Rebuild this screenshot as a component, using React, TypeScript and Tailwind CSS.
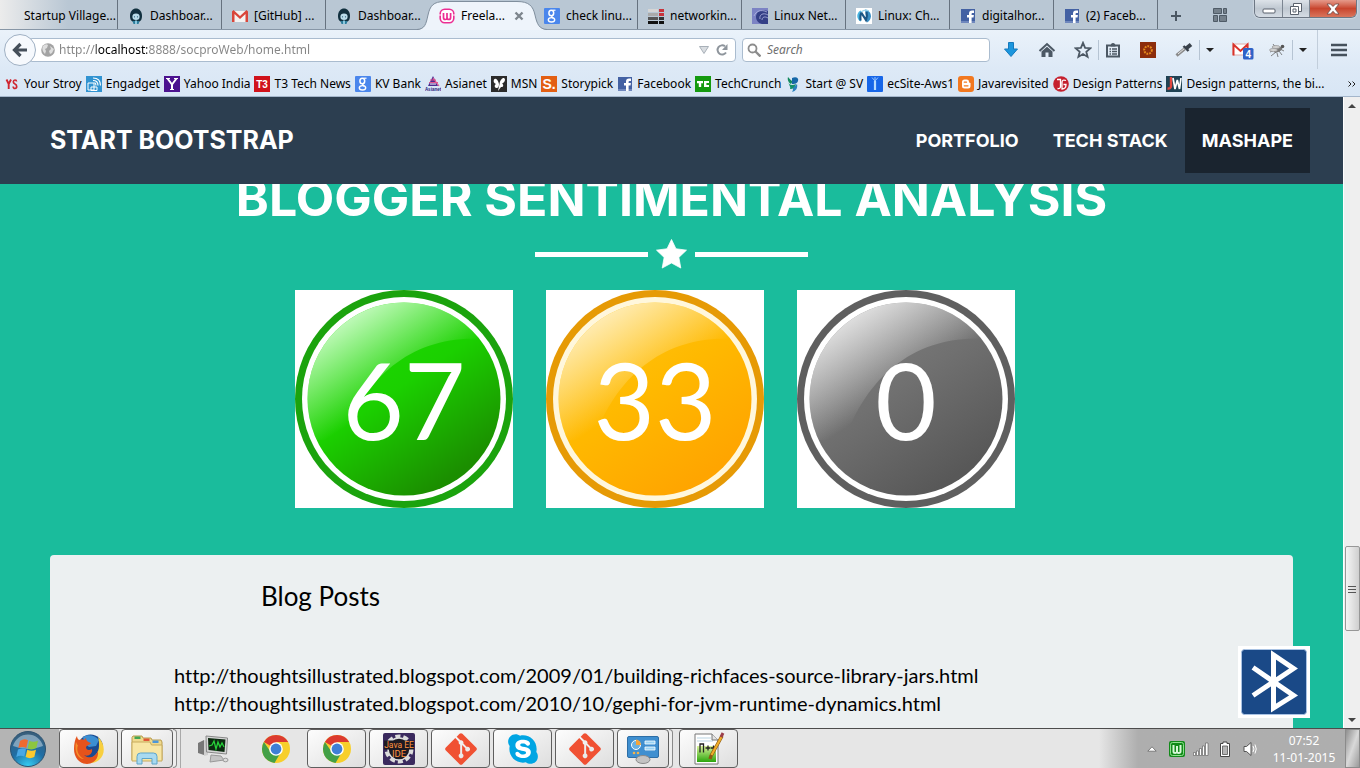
import React from "react";
import type { ReactNode } from "react";
import { FaGitAlt, FaSkype } from "react-icons/fa";

/* ---------- small site icons ---------- */

function Tile({ bg, fg = "#fff", label, size = 11, font = "Liberation Sans", x = 8, y = 12, r = 0 }: {
  bg: string; fg?: string; label: string; size?: number; font?: string; x?: number; y?: number; r?: number;
}) {
  return (
    <svg viewBox="0 0 16 16" className="size-4 shrink-0" aria-hidden="true">
      <rect width="16" height="16" rx={r} fill={bg} />
      <text x={x} y={y} fontSize={size} fontWeight="700" fontFamily={`${font}, sans-serif`} fill={fg} textAnchor="middle">{label}</text>
    </svg>
  );
}

const Icon16 = ({ children }: { children: ReactNode }) => (
  <svg viewBox="0 0 16 16" className="size-4 shrink-0" aria-hidden="true">{children}</svg>
);

const Facebook = () => (
  <Icon16>
    <rect x="1" y="1" width="14" height="14" fill="#4361a3" />
    <path d="M1 13h14v2H1z" fill="#6f87bd" />
    <path d="M9 15V9.500H7V7h2V5.500C9 3.500 10 2.500 12 2.500h2V5h-1.300c-.8 0-1.100.3-1.100 1V7h2.300l-.4 2.500h-1.900V15z" fill="#fff" />
  </Icon16>
);

const Google = () => (
  <Icon16>
    <rect width="16" height="16" rx="1" fill="#4a86ec" />
    <ellipse cx="7.300" cy="5" rx="2.400" ry="2.800" fill="none" stroke="#fff" strokeWidth="1.500" />
    <path d="M8.500 2.200h3" stroke="#fff" strokeWidth="1.200" />
    <path d="M9 7.200C6.500 8.500 8 9.200 9.500 10.200" fill="none" stroke="#fff" strokeWidth="1.300" />
    <ellipse cx="7.500" cy="11.800" rx="3.200" ry="2.200" fill="none" stroke="#fff" strokeWidth="1.400" />
  </Icon16>
);

const Dashboard = () => (
  <Icon16>
    <path d="M2 8c0-5 3-7.500 6-7.500S14 3 14 8c0 3-1 5-2.500 5.500h-7C3 13 2 11 2 8z" fill="#11303f" />
    <ellipse cx="8" cy="8.800" rx="3.600" ry="3.200" fill="#b9dcea" />
    <circle cx="6.500" cy="8.800" r=".6" fill="#1d5871" />
    <circle cx="9.500" cy="8.800" r=".6" fill="#1d5871" />
    <path d="M4.500 13h7l-1 3h-5z" fill="#2c7c9b" />
    <path d="M7 12.500h2V16H7z" fill="#8bc7dd" />
  </Icon16>
);

const Gmail = () => (
  <Icon16>
    <rect x="1" y="3" width="14" height="11" fill="#f4f2f1" />
    <path d="M0 3.500 1.500 2 8 8l6.500-6L16 3.500V14h-2.500V6L8 11 2.500 6v8H0z" fill="#d9453a" />
  </Icon16>
);

const Wamp = () => (
  <Icon16>
    <rect x="1.200" y="1.200" width="13.600" height="13.600" rx="4.500" fill="#fff" stroke="#ec2e93" strokeWidth="1.600" />
    <path d="M4.500 5v4.500Q4.500 11.500 6.300 11.500T8 9.500V5v4.500q0 2 1.800 2t1.800-2V5" fill="none" stroke="#ec2e93" strokeWidth="1.700" />
    <path d="M0 7h2M14 7h2" stroke="#fff" strokeWidth="1.200" />
  </Icon16>
);

const Bars = () => (
  <Icon16>
    <path d="M0 1h10v3H0z" fill="#d5d5d5" /><path d="M0 5h10v3H0z" fill="#aaa" />
    <path d="M0 9h10v3H0z" fill="#555" /><path d="M0 13h10v3H0zM11 13h5v3h-5z" fill="#111" />
    <path d="M11 1h5v3h-5zM11 5h5v3h-5z" fill="#c8343c" /><path d="M11 9h5v3h-5z" fill="#333" />
  </Icon16>
);

const Swirl = () => (
  <Icon16>
    <rect width="16" height="16" fill="#7c83c4" />
    <path d="M16 3C9 1 4 4 4 9c0 3 2 6 6 7h6z" fill="#343f86" />
    <path d="M16 7c-5-3-9 0-8 4M16 10c-3-2-6-1-6 2M2 8C4 3 9 1 15 4" fill="none" stroke="#b3b8e2" strokeWidth=".8" />
  </Icon16>
);

const Naver = () => (
  <Icon16>
    <rect width="16" height="16" fill="#fff" />
    <path d="M5 13.500C0 12 0 4 5 2.500z" fill="#49b4e0" />
    <path d="M9 1.500c7 1 8 10 2 13z" fill="#3b8fc4" />
    <path d="M4.500 12.500Q4 6 5.500 5L10 12q1.500-4 .5-8" fill="none" stroke="#1c5685" strokeWidth="2.200" />
    <path d="M5 4q4-3 8-1" fill="none" stroke="#9fd6ee" strokeWidth="1.200" />
  </Icon16>
);

const Engadget = () => (
  <Icon16>
    <rect width="16" height="16" fill="#3193d1" />
    <path d="M2 7h6v7H2zM5 11h6v3.500H5z" fill="none" stroke="#fff" />
    <path d="M7 4.500q5 0 5 5M7 2q7.500 0 7.500 7.500M8.500 6.500q1.500 1 1.500 3" fill="none" stroke="#fff" strokeWidth="1.100" />
  </Icon16>
);

const Asianet = () => (
  <Icon16>
    <path d="M8 0 3 10h10z" fill="#4a2c91" />
    <path d="M5 4h6M4 6.500h9M8 2l6 8" stroke="#e4558f" strokeWidth="1.200" />
    <path d="M5 8h6" stroke="#fff" />
    <text x="8" y="15" fontSize="4.500" fontWeight="700" fontFamily="Liberation Sans, sans-serif" fill="#26217c" textAnchor="middle">Asianet</text>
  </Icon16>
);

const Msn = () => (
  <Icon16>
    <rect width="16" height="16" fill="#2b2b2b" />
    <path d="M8 8C7 3 4 1.500 3 3.500s0 3.500 2 4.500c-2 1-1.500 4 .5 4S8 10 8 8zM8.500 8C9 4 12 1 13.500 2.500S13 7 11 7.500c2 1 1.500 4-1 3.500L7 15z" fill="#fff" />
  </Icon16>
);

const Leaf = () => (
  <Icon16>
    <path d="M3 1c2 2 3 4 5 4L6 8C4 7 2 4 3 1z" fill="#138a5d" /><path d="M7 2c4-2 7 0 6 3s-4 3-6 3z" fill="#1668a8" />
    <path d="M3 6c1 3 4 4 8 2-1 4-3 5-6 5 1-2-1-4-2-7z" fill="#12906a" /><path d="M12 8c1 4-1 7-5 8 1-1 1-3 1-4z" fill="#2a82be" />
  </Icon16>
);

const Aws = () => (
  <Icon16>
    <rect width="16" height="16" rx="1" fill="#1766e8" />
    <path d="M8 5v9" stroke="#b8dcff" strokeWidth="2.200" />
    <path d="M5 1.500 8 5l3-3.500M8 1v4" fill="none" stroke="#9cc8ff" />
  </Icon16>
);

const Blogger = () => (
  <Icon16>
    <rect width="16" height="16" rx="3" fill="#f2781f" />
    <path d="M6.500 3.500h2.300q2.200 0 2.200 2.200 0 1.300 1.500 1.300V10q0 2.500-2.500 2.500H6.500Q4 12.500 4 10V6q0-2.500 2.500-2.500z" fill="#fff" />
    <path d="M6.300 6.200h2.200M6.300 9.800h3.700" stroke="#f2781f" strokeWidth="1.300" strokeLinecap="round" />
  </Icon16>
);

const Patterns = () => (
  <Icon16>
    <circle cx="8" cy="8" r="7.800" fill="#c5202e" />
    <path d="M4 3.500h3.500v7q0 2.500-3 2M13 4.500q-4-1.500-4 2V13q4 0 4-4.500h-2.500" fill="none" stroke="#fff" strokeWidth="1.300" />
  </Icon16>
);

const Jw = () => (
  <Icon16>
    <rect width="16" height="16" fill="#1f4254" />
    <path d="M5 1v9q0 3-3.500 2.500" fill="none" stroke="#e0463e" strokeWidth="2.400" />
    <path d="m7 2 2 11 2.300-9L13.500 13 15 2" fill="none" stroke="#fff" strokeWidth="1.700" />
  </Icon16>
);

/* ---------- browser chrome ---------- */

type Tab = { label: string; icon?: ReactNode; active?: boolean };

const tabs: Tab[] = [
  { label: "Startup Village..." },
  { label: "Dashboar...", icon: <Dashboard /> },
  { label: "[GitHub] ...", icon: <Gmail /> },
  { label: "Dashboar...", icon: <Dashboard /> },
  { label: "Freela...", icon: <Wamp />, active: true },
  { label: "check linu...", icon: <Google /> },
  { label: "networkin...", icon: <Bars /> },
  { label: "Linux Net...", icon: <Swirl /> },
  { label: "Linux: Ch...", icon: <Naver /> },
  { label: "digitalhor...", icon: <Facebook /> },
  { label: "(2) Faceb...", icon: <Facebook /> },
];

function TabStrip() {
  return (
    <div className="flex h-[30px] items-stretch border-b border-[#8796a6] bg-linear-to-r from-[#ececec] from-0% via-[#b9c7d4] via-5% to-[#b9c7d4] pl-[14px]">
      <div role="tablist" className="flex">
        {tabs.map((tab, i) =>
          tab.active ? (
            <div key={i} className="relative flex w-[104px] items-center gap-1.5 pl-[9px] pt-0.5">
              <svg viewBox="0 0 130 30" className="absolute -left-[13px] top-0 z-0 h-[30px] w-[130px]" aria-hidden="true">
                <path d="M0 30C8 29 9 24 11 15S16 1.500 28 1.500H100C112 1.500 116 6 118 15s4 14 12 15z" fill="#eef4fb" />
                <path d="M0 29.500C8 29 9 24 11 15S16 1.500 28 1.500H100C112 1.500 116 6 118 15s4 14 12 14.500" fill="none" stroke="#7f8e9d" />
              </svg>
              <button role="tab" aria-selected="true" className="relative flex items-center gap-1.5">
                {tab.icon}
                <span>{tab.label}</span>
              </button>
              <button aria-label="Close tab" className="relative ml-auto mr-2.5">
                <svg viewBox="0 0 10 10" className="size-2.5"><path d="m1.500 1.500 7 7m0-7-7 7" stroke="#7d858d" strokeWidth="2.400" /></svg>
              </button>
            </div>
          ) : (
            <button key={i} role="tab" aria-selected="false" className={`flex w-[104px] items-center gap-1.5 whitespace-nowrap pl-2.5 pt-0.5 ${i === 3 ? "" : "border-r border-[#66727f]"}`}>
              {tab.icon}
              <span>{tab.label}</span>
            </button>
          ),
        )}
      </div>
      <button aria-label="New tab" className="ml-3 flex items-center pt-0.5">
        <svg viewBox="0 0 12 12" className="size-3"><path d="M6 1v10M1 6h10" stroke="#4b5763" strokeWidth="2" /></svg>
      </button>
      <button aria-label="Tab groups" className="ml-[30px] flex items-center">
        <svg viewBox="0 0 16 14" className="h-3.5 w-4">
          <path d="M1.500.5h8v5h-8zM11.500.5h3v5h-3zM1.500 7.500h4v6h-4zM7.500 7.500h7v6h-7z" fill="#74808b" stroke="#4f5b67" />
        </svg>
      </button>
      <div className="ml-auto mr-[3px] flex h-[18px] overflow-hidden rounded-b-md border border-t-0 border-[#6d7784] shadow-[0_0_2px_#ffffff]">
        <button aria-label="Minimize" className="flex w-7 items-center justify-center border-r border-[#7b8591] bg-linear-to-b from-[#dde3e9] via-[#bfc8d1] to-[#d5dce4]">
          <svg viewBox="0 0 14 6" className="mt-1 h-1.5 w-3.5"><rect x="1" y="1" width="12" height="4" rx="1" fill="#fff" stroke="#59616c" /></svg>
        </button>
        <button aria-label="Restore" className="flex w-[27px] items-center justify-center border-r border-[#7b8591] bg-linear-to-b from-[#dde3e9] via-[#bfc8d1] to-[#d5dce4]">
          <svg viewBox="0 0 12 12" className="size-3 fill-white stroke-[#59616c]"><path d="M3.500.5h8v8h-8z" /><path d="M.5 3.500h8v8h-8z" /><path d="M3 6h3v3H3z" /></svg>
        </button>
        <button aria-label="Close" className="flex w-[46px] items-center justify-center bg-linear-to-b from-[#e59a8b] via-[#c8452e] to-[#d9755c]">
          <svg viewBox="0 0 14 12" className="h-3 w-3.5"><path d="m1 1 3.500 0L7 3.500 9.500 1H13L9 6l4 5H9.500L7 8.300 4.500 11H1l4-5z" fill="#fff" stroke="#6a4a48" strokeWidth=".8" /></svg>
        </button>
      </div>
    </div>
  );
}

function Toolbar() {
  return (
    <div className="flex h-[39px] items-center bg-linear-to-b from-[#eaf2fa] to-[#dde9f6] pl-1">
      <button aria-label="Back" className="relative z-10 flex size-8 shrink-0 items-center justify-center rounded-full border border-[#9fb0c3] bg-[#f6f9fd]">
        <svg viewBox="0 0 16 16" className="size-4"><path d="M8.500 2 2.500 8l6 6M3 8h12" fill="none" stroke="#454f5a" strokeWidth="3.200" /></svg>
      </button>
      <div className="-ml-2 flex h-6 flex-1 items-center rounded-sm border border-[#aabccf] bg-white pl-3 pr-1.5">
        <svg viewBox="0 0 14 14" className="size-3.5 shrink-0" aria-hidden="true">
          <circle cx="7" cy="7" r="6.800" fill="#a3a3a3" />
          <path d="M2 3q3-3 5-1L6 5 4 6l1 2-1 3Q0 7 2 3zM9 3l4 3-2 4-2 1-1-3 2-2z" fill="#dedede" />
        </svg>
        <input
          aria-label="Address"
          defaultValue="http://localhost:8888/socproWeb/home.html"
          className="ml-1 h-5 min-w-0 flex-1 bg-[linear-gradient(to_right,#858585_37px,#000000_37px,#000000_88px,#858585_88px)] bg-clip-text text-transparent outline-none"
        />
        <button aria-label="Show history">
          <svg viewBox="0 0 10 8" className="h-2 w-2.5"><path d="M.5.5h9L5 7.500z" fill="#d9dde1" stroke="#a8b0b8" /></svg>
        </button>
        <button aria-label="Reload" className="ml-1.5">
          <svg viewBox="0 0 14 14" className="size-3.5"><path d="M11 9.500A4.600 4.600 0 1 1 10 3.300" fill="none" stroke="#8e959c" strokeWidth="2" /><path d="M12.500 1v6H7z" fill="#8e959c" /></svg>
        </button>
      </div>
      <div className="ml-1.5 flex h-6 w-[248px] items-center gap-1.5 rounded-sm border border-[#aabccf] bg-white px-1">
        <svg viewBox="0 0 14 14" className="size-3.5 shrink-0" aria-hidden="true"><circle cx="5.500" cy="5.500" r="4" fill="none" stroke="#8c8c8c" strokeWidth="1.800" /><path d="m8.500 8.500 5 5" stroke="#8c8c8c" strokeWidth="2.400" /></svg>
        <input aria-label="Search" placeholder="Search" className="h-5 min-w-0 flex-1 bg-transparent italic outline-none placeholder:text-[#6f6f6f]" />
      </div>
      <div className="flex h-full items-center pl-3.5">
        <button aria-label="Downloads"><svg viewBox="0 0 14 15" className="h-[15px] w-3.5"><path d="M4.500.5h5V7h4L7 14.500.5 7h4z" fill="#1c96dd" stroke="#1579bd" /></svg></button>
        <button aria-label="Home" className="ml-5">
          <svg viewBox="0 0 18 16" className="h-4 w-[18px]"><path d="M1.500 9 9 2l7.500 7" fill="none" stroke="#4c5864" strokeWidth="2" /><path d="M3.500 9.500 9 4.800l5.500 4.700V15h-4v-4.500h-3V15h-4z" fill="#4c5864" /></svg>
        </button>
        <button aria-label="Bookmark this page" className="ml-[18px]">
          <svg viewBox="0 0 18 18" className="size-[18px]"><path d="m9 1.800 2.100 5 5.300.4-4.100 3.500 1.300 5.200L9 13.100l-4.600 2.800 1.300-5.200L1.600 7.200l5.300-.4z" fill="none" stroke="#4c5864" strokeWidth="1.800" /></svg>
        </button>
        <span className="ml-1.5 h-5 w-px bg-[#b6c4d3]" />
        <button aria-label="Bookmarks" className="ml-1.5">
          <svg viewBox="0 0 16 16" className="size-4"><path d="M2 3.500h12v11H2z" fill="none" stroke="#4c5864" strokeWidth="2" /><path d="M5.500 4.500 6 2q2-2 4 0l.5 2.500z" fill="#4c5864" /><path d="M4.500 7h1.500M7 7h5M4.500 9.500h1.500M7 9.500h5M4.500 12h1.500M7 12h5" stroke="#4c5864" strokeWidth="1.300" /></svg>
        </button>
        <button aria-label="Extension" className="ml-[19px]">
          <svg viewBox="0 0 16 16" className="size-4"><rect width="16" height="16" fill="#8c2d0c" /><circle cx="8" cy="8" r="3.800" fill="none" stroke="#e68a1c" strokeWidth="2" strokeDasharray="1.800 1" /></svg>
        </button>
        <button aria-label="Color picker" className="ml-[19px]">
          <svg viewBox="0 0 18 16" className="h-4 w-[18px]"><path d="m1.500 13.500 8-6.500" stroke="#8b8b8b" strokeWidth="3.200" /><path d="m3 12 7-6" stroke="#e9e9e9" /><path d="m8.500 4 5 5" stroke="#39414a" strokeWidth="2.400" /><path d="m11 6.500 5-4" stroke="#39414a" strokeWidth="4" /></svg>
        </button>
        <span className="ml-1.5 h-5 w-px bg-[#b6c4d3]" />
        <button aria-label="Color picker menu" className="ml-1.5"><svg viewBox="0 0 8 4" className="h-1 w-2"><path d="M0 0h8L4 4z" fill="#222" /></svg></button>
        <button aria-label="Mail" className="relative ml-[18px] flex h-5 w-[22px] items-center">
          <svg viewBox="0 0 22 20" className="h-5 w-[22px]">
            <path d="M1 4h15v11H1z" fill="#fff" stroke="#e0aaa6" /><path d="M1.500 15.500v-11l7 6.500 7-6.500v11" fill="none" stroke="#d9332b" strokeWidth="2" />
            <rect x="11" y="8" width="10.500" height="11.500" rx="1.500" fill="#2f62c7" />
            <text x="16.200" y="17.500" fontSize="10" fontWeight="700" fontFamily="Liberation Sans, sans-serif" fill="#fff" textAnchor="middle">4</text>
          </svg>
        </button>
        <button aria-label="Firebug" className="ml-3.5">
          <svg viewBox="0 0 18 16" className="h-4 w-[18px]"><path d="m2 10 5-2M3 14l5-4M9 11l1 4M5 2l3 4M16 9l-4-2M14 13l-3-4" stroke="#666" strokeWidth=".8" /><ellipse cx="10" cy="8" rx="4.500" ry="2" transform="rotate(-28 10 8)" fill="#777" /><ellipse cx="5.500" cy="8" rx="4" ry="1.600" fill="#d2d2d2" stroke="#888" strokeWidth=".6" /><ellipse cx="8" cy="5" rx="4" ry="1.500" fill="#d2d2d2" stroke="#888" strokeWidth=".6" /><circle cx="14.500" cy="4.500" r="1.800" fill="#555" /></svg>
        </button>
        <span className="ml-1.5 h-5 w-px bg-[#b6c4d3]" />
        <button aria-label="Firebug menu" className="ml-1.5"><svg viewBox="0 0 8 4" className="h-1 w-2"><path d="M0 0h8L4 4z" fill="#222" /></svg></button>
        <span className="ml-2.5 h-full w-px bg-[#c2cedb]" />
        <button aria-label="Open menu" className="mx-[13px]"><svg viewBox="0 0 16 14" className="h-3.5 w-4"><path d="M0 2h16M0 7h16M0 12h16" stroke="#46515c" strokeWidth="2.600" /></svg></button>
      </div>
    </div>
  );
}

const bookmarks: { label: string; icon: ReactNode }[] = [
  { label: "Your Stroy", icon: <Icon16><path d="M2.500 3.500 4.700 8v5M7 3.500 4.700 8" fill="none" stroke="#cf2630" strokeWidth="1.900" /><path d="M12.500 5.500Q12.500 4 11 4T9.300 5.800Q9.300 7.300 11 8t1.700 2.600Q12.700 12.500 11 12.500T9.200 10.500" fill="none" stroke="#cf2630" strokeWidth="1.700" /></Icon16> },
  { label: "Engadget", icon: <Engadget /> },
  { label: "Yahoo India", icon: <Icon16><rect width="16" height="16" fill="#4b128f" /><path d="m3.500 2.500 4.500 6v5M12.500 2.500l-4.500 6" fill="none" stroke="#fff" strokeWidth="2" /><path d="M2 2.500h4M10 2.500h4M6 13.500h4" stroke="#fff" /></Icon16> },
  { label: "T3 Tech News", icon: <Tile bg="#d0121b" label="T3" size={10} /> },
  { label: "KV Bank", icon: <Google /> },
  { label: "Asianet", icon: <Asianet /> },
  { label: "MSN", icon: <Msn /> },
  { label: "Storypick", icon: <Tile bg="#e35f13" label="S." size={14} y={13} /> },
  { label: "Facebook", icon: <Facebook /> },
  { label: "TechCrunch", icon: <Icon16><rect width="16" height="16" fill="#149a10" /><path d="M2 5h6v2.300H6.200V11H3.800V7.300H2zM9 5h5v2h-2.600v2H14v2H9z" fill="#fff" /></Icon16> },
  { label: "Start @ SV", icon: <Leaf /> },
  { label: "ecSite-Aws1", icon: <Aws /> },
  { label: "Javarevisited", icon: <Blogger /> },
  { label: "Design Patterns", icon: <Patterns /> },
  { label: "Design patterns, the bi...", icon: <Jw /> },
];

function BookmarkBar() {
  return (
    <nav aria-label="Bookmarks" className="flex h-7 items-center border-b border-[#a4b6cb] bg-linear-to-b from-[#dde9f6] to-[#d8e6f5] pl-1 pt-0.5">
      <div className="flex min-w-0 flex-1 items-center gap-1 overflow-hidden">
        {bookmarks.map((b) => (
          <a key={b.label} href="#" className="flex shrink-0 items-center gap-1 whitespace-nowrap">
            {b.icon}
            <span>{b.label}</span>
          </a>
        ))}
      </div>
      <button aria-label="More bookmarks" className="mr-1">
        <svg viewBox="0 0 8 6" className="h-1.5 w-2"><path d="m.5.5 2.500 2.500L.5 5.500m4-5L7 3 4.500 5.500" fill="none" stroke="#222" /></svg>
      </button>
    </nav>
  );
}

/* ---------- page ---------- */

type ScoreProps = { id: string; value: number; ring: string; inner: string; shine: string; from: string; mid: string; to: string };

const scores: ScoreProps[] = [
  { id: "positive", value: 67, ring: "#1ba30d", inner: "#ffffff", shine: "#e2ffe0", from: "#1bdd00", mid: "#1bd000", to: "#1b8e00" },
  { id: "neutral", value: 33, ring: "#e69a05", inner: "#fff7dc", shine: "#fff3d2", from: "#ffc513", mid: "#ffb900", to: "#ffa500" },
  { id: "negative", value: 0, ring: "#5f5f5f", inner: "#ffffff", shine: "#f2f2f2", from: "#808080", mid: "#707070", to: "#585858" },
];

function Score({ id, value, ring, inner, shine, from, mid, to }: ScoreProps) {
  return (
    <div className="relative mr-[33px] size-[218px] bg-white">
      <svg viewBox="0 0 218 218" className="size-full" aria-hidden="true">
        <defs>
          <linearGradient id={`${id}-base`} x1=".2" y1=".1" x2=".75" y2=".9">
            <stop offset="0" stopColor={from} /><stop offset=".45" stopColor={mid} /><stop offset="1" stopColor={to} />
          </linearGradient>
          <linearGradient id={`${id}-shine`} gradientUnits="userSpaceOnUse" x1="52" y1="14" x2="108" y2="99">
            <stop offset="0" stopColor={shine} stopOpacity=".95" /><stop offset="1" stopColor={shine} stopOpacity="0" />
          </linearGradient>
          <clipPath id={`${id}-clip`}><circle cx="109" cy="109" r="96.500" /></clipPath>
        </defs>
        <circle cx="109" cy="109" r="109" fill={ring} />
        <circle cx="109" cy="109" r="102" fill={inner} />
        <circle cx="109" cy="109" r="96.500" fill={`url(#${id}-base)`} />
        <path clipPath={`url(#${id}-clip)`} d="M218 0V49H184C120 46 70 85 48 150H0V0z" fill={`url(#${id}-shine)`} />
      </svg>
      <span className="absolute inset-0 flex items-center justify-center font-[Lato,sans-serif] text-[106px] leading-none text-white">{value}</span>
    </div>
  );
}

const posts = [
  "http://thoughtsillustrated.blogspot.com/2009/01/building-richfaces-source-library-jars.html",
  "http://thoughtsillustrated.blogspot.com/2010/10/gephi-for-jvm-runtime-dynamics.html",
];

function Page() {
  return (
    <div className="relative flex min-w-0 flex-1 flex-col overflow-hidden bg-[#1abc9c] font-[Lato,sans-serif]">
      <header className="relative z-10 flex h-[87px] shrink-0 items-center justify-between bg-[#2c3e50] pl-[50px] pr-[33px] font-[Inter,sans-serif] font-bold text-white">
        <a href="#" className="text-[25px]">START BOOTSTRAP</a>
        <nav className="flex text-lg">
          <a href="#" className="flex h-[65px] items-center px-[17px]">PORTFOLIO</a>
          <a href="#" className="flex h-[65px] items-center px-[17px]">TECH STACK</a>
          <a href="#" className="flex h-[65px] items-center bg-[#1a242f] px-[17px]">MASHAPE</a>
        </nav>
      </header>
      <main className="flex min-h-0 flex-1 flex-col">
        <h2 className="-mt-2.5 shrink-0 text-center font-[Inter,sans-serif] text-[50px]/12 font-bold text-white">BLOGGER SENTIMENTAL ANALYSIS</h2>
        <div className="mt-4 flex shrink-0 items-center justify-center gap-2">
          <span className="h-[5px] w-[113px] bg-white" />
          <svg viewBox="0 0 32 32" className="h-8 w-[31px]" aria-hidden="true">
            <path d="M16 1 20.600 10.600 31.500 12 23.600 19.500 25.600 30.500 16 25.300 6.400 30.500 8.400 19.500.5 12 11.400 10.600z" fill="#fff" stroke="#fff" strokeWidth=".8" strokeLinejoin="round" />
          </svg>
          <span className="h-[5px] w-[113px] bg-white" />
        </div>
        <div className="mt-5 flex shrink-0 justify-center">
          {scores.map((s) => <Score key={s.id} {...s} />)}
        </div>
        <section className="mx-[50px] mt-[47px] flex-1 rounded-t-sm bg-[#ecf0f1] pt-[23px] text-black">
          <h3 className="pl-[211px] text-[26px]/9">Blog Posts</h3>
          <ul className="mt-[47px] pl-[124px] text-xl/7 [font-variant-ligatures:none]">
            {posts.map((p) => <li key={p}><a href={p}>{p}</a></li>)}
          </ul>
        </section>
      </main>
      <button aria-label="Bluetooth" className="absolute bottom-2.5 right-[33px] z-10 size-[72px] bg-white">
        <svg viewBox="0 0 72 72" className="size-full">
          <rect x="3.500" y="3.500" width="65" height="65" rx="3" fill="#1a4987" stroke="#a9c3e4" />
          <path d="M15 21.500 55.500 49.500 35.500 62V9L55.500 22.500 15 49.500" fill="none" stroke="#fff" strokeWidth="5" />
        </svg>
      </button>
    </div>
  );
}

function ScrollBar() {
  return (
    <div className="flex w-[17px] shrink-0 flex-col items-center border-l border-white bg-[#efefef]">
      <button aria-label="Scroll up" className="flex h-[17px] items-center"><svg viewBox="0 0 8 4" className="h-1 w-2"><path d="M0 4h8L4 0z" fill="#444" /></svg></button>
      <div className="flex-[432]" />
      <div className="flex h-[85px] w-[15px] items-center justify-center rounded-xs border border-[#979797] bg-linear-to-r from-[#f5f5f5] to-[#cfcfcf]">
        <svg viewBox="0 0 8 8" className="size-2"><path d="M0 1.500h8M0 4.500h8M0 7.500h8" stroke="#555" /></svg>
      </div>
      <div className="flex-[80]" />
      <button aria-label="Scroll down" className="flex h-[17px] items-center"><svg viewBox="0 0 8 4" className="h-1 w-2"><path d="M0 0h8L4 4z" fill="#444" /></svg></button>
    </div>
  );
}

/* ---------- task bar ---------- */

const Chrome = () => (
  <svg viewBox="0 0 30 30" className="size-[30px]" aria-hidden="true">
    <circle cx="15" cy="15" r="14" fill="#f7cf2c" />
    <path d="M15 15 2.900 8A14 14 0 0 1 27.200 8z" fill="#dc3a2f" />
    <path d="M2.900 8A14 14 0 0 0 13.500 29L20 18 9 17z" fill="#43a047" />
    <path d="M15 8h12.200L20 19z" fill="#f7cf2c" />
    <circle cx="15" cy="15" r="6.800" fill="#fff" />
    <circle cx="15" cy="15" r="5.400" fill="#3f7fd6" />
  </svg>
);

const Firefox = () => (
  <svg viewBox="0 0 32 32" className="size-8" aria-hidden="true">
    <circle cx="17.500" cy="14" r="12.500" fill="#1b4a90" />
    <path d="M10 4c5-3 12-2 16 3l-3 6-7 1-5-4z" fill="#3c8fd2" />
    <path d="M25 4c7 6 8 17 1 23-6 5-15 3-17-2 10 3 17-4 17-12 0-3 0-6-1-9z" fill="#f8cf3f" />
    <path d="M4 3c0 2 1 3 2 4 2-1 4-1 5 0l2-2c0 3 2 4 5 5-1 2-4 2-5 4 0 3 3 4 6 2 1 5-4 8-8 6 4 4 11 3 14-4 1 8-5 13-11 13C6 31 1 24 1 16c0-5 1-10 3-13z" fill="#e5531b" />
    <path d="M3 9c1 2 1 3 2 3-2 5 0 11 6 14-6 0-10-7-8-17z" fill="#f58f2a" />
  </svg>
);

const Explorer = () => (
  <svg viewBox="0 0 34 32" className="h-8 w-[34px]" aria-hidden="true">
    <path d="M2 4.500 3 3h9l1 2h8l1 2h9l1 2v18H2z" fill="#f0d98d" stroke="#b89c4e" />
    <path d="M4.500 3.500h6v2.500h-6z" fill="#43a653" /><path d="M13.500 5.500h6V8h-6z" fill="#e05838" /><path d="M22.500 7.500h6V10h-6z" fill="#4d97d9" />
    <path d="M2 9h18l1.500 3H32v16H2z" fill="#f8e6a4" stroke="#c7aa5c" />
    <path d="M7 31v-7.500Q7 20 10.500 20h13q3.500 0 3.500 3.500V31h-5v-5.500H12V31z" fill="#a9daf0" stroke="#5ea5ca" />
  </svg>
);

const Monitor = () => (
  <svg viewBox="0 0 32 28" className="h-7 w-8" aria-hidden="true">
    <path d="M1 8 7 5v15l-6-2z" fill="#777" /><path d="m7 5 4 1v14l-4 1z" fill="#cfcfcf" />
    <path d="m9 1 21.500 2-1 16L9.500 17z" fill="#d6d6d6" stroke="#888" /><path d="m11 3 17.500 1.500-1 12.500L11.500 15z" fill="#0d2a11" />
    <path d="m12 11 3-1 2-4 2 8 2-7 2 5 2-4 2 4" fill="none" stroke="#27d33a" strokeWidth="1.300" />
    <path d="m14 20 10 1 3 4-14 2z" fill="#c4c4c4" stroke="#999" /><ellipse cx="28.500" cy="25" rx="2.500" ry="1.800" fill="#ddd" stroke="#999" />
  </svg>
);

const JavaEe = () => (
  <svg viewBox="0 0 32 32" className="size-8" aria-hidden="true">
    <rect width="32" height="32" rx="2" fill="#3b2a5e" />
    <circle cx="16" cy="16" r="12.500" fill="none" stroke="#dcdcdc" strokeWidth="4" strokeDasharray="5 2.850" />
    <circle cx="16" cy="16" r="11" fill="#1d1a22" stroke="#dcdcdc" strokeWidth="1.500" />
    <rect x="1" y="7.500" width="30" height="9" fill="#1d1a22" />
    <text x="16" y="15" fontSize="8.500" fontFamily="Roboto, sans-serif" fill="#ff9340" textAnchor="middle">Java EE</text>
    <text x="16" y="24" fontSize="9.500" fontFamily="Roboto, sans-serif" fill="#ff9340" textAnchor="middle">IDE</text>
  </svg>
);

const Control = () => (
  <svg viewBox="0 0 32 30" className="h-[30px] w-8" aria-hidden="true">
    <rect x=".5" y="2.500" width="31" height="21" rx="1.500" fill="#3f8fd0" stroke="#2d6ea6" />
    <circle cx="9" cy="11" r="4.500" fill="#68b1e3" stroke="#fff" /><path d="M9 11V5.500a5.500 5.500 0 0 1 5 5.500z" fill="#f3a53c" />
    <path d="M18 7h10v3H18zM18 13h10v3H18z" fill="#9ad4f5" stroke="#fff" strokeWidth=".8" />
    <circle cx="7" cy="19" r="1.300" fill="#f3b34a" /><circle cx="11" cy="19" r="1.300" fill="#f3b34a" />
    <ellipse cx="16" cy="25.500" rx="7" ry="4" fill="#c3c3c3" stroke="#8a8a8a" />
  </svg>
);

const Notepad = () => (
  <svg viewBox="0 0 32 34" className="h-[34px] w-8" aria-hidden="true">
    <defs><linearGradient id="npp" x1="0" y1="0" x2="0" y2="1"><stop offset="0" stopColor="#d9f29a" /><stop offset="1" stopColor="#2ba50c" /></linearGradient></defs>
    <path d="M2 2h17l6 6v24H2z" fill="#fff" stroke="#777" /><path d="M4 6h14M4 9h16" stroke="#b9d3e2" />
    <path d="M4 14h19v16H4z" fill="url(#npp)" /><path d="M19 2v6h6" fill="#e3e3e3" stroke="#777" />
    <path d="M7 20.500V12h3.500v8.500M12.500 16h5M15 13.500v5M18 16h5M20.500 13.500v5" fill="none" stroke="#222" strokeWidth="1.300" />
    <path d="m29 4-11 20-1 3" stroke="#8c5a12" strokeWidth="3.400" fill="none" /><path d="m28.500 5-10 18" stroke="#f0ad2a" strokeWidth="2.200" /><path d="m28 5 2-4" stroke="#9c3f4a" strokeWidth="3" />
  </svg>
);

function Task({ label, stacked, children }: { label: string; stacked?: boolean; children: ReactNode }) {
  return (
    <button aria-label={label} className="mr-[3px] flex h-full">
      <span className={`flex h-full items-center justify-center rounded-sm border border-[#5f5f5f] bg-linear-to-br from-[#fdfdfd] to-[#dedede] ${stacked ? "w-[52px]" : "w-[59px]"}`}>{children}</span>
      {stacked && <span className="h-full w-1 rounded-r-sm border border-l-0 border-[#8a8a8a] bg-[#eee]" />}
    </button>
  );
}

function TaskBar() {
  return (
    <footer className="flex h-10 shrink-0 items-stretch border-t border-[#4c4c4c] bg-[#e6e6e6]">
      <button aria-label="Start" className="flex w-[59px] items-center justify-center bg-[#b4b4b4] pr-1">
        <svg viewBox="0 0 36 36" className="size-9">
          <defs>
            <radialGradient id="orb" cx=".5" cy="1" r="1"><stop offset="0" stopColor="#35d0f5" /><stop offset=".5" stopColor="#1f6ea5" /><stop offset="1" stopColor="#3b5d78" /></radialGradient>
          </defs>
          <circle cx="18" cy="18" r="17.500" fill="url(#orb)" stroke="#2c5270" />
          <path d="M3 15a15.500 15.500 0 0 1 30 0Q18 21 3 15z" fill="#c3d6e2" opacity=".55" />
          <path d="M10 10q4-3 8-.8L16.300 17Q12.500 15.200 8.300 17z" fill="#ee6a30" /><path d="M19.300 9.700q4 2.300 8.700 0L26.300 17q-4.300 2.500-8.700.5z" fill="#8cc63f" />
          <path d="M8 18.500q4.200-2 8-.3L14.300 25.500q-4-1.700-8 .5z" fill="#49a8e6" /><path d="M17.300 18.700q4.200 2.200 8.700 0L24.300 26q-4.300 2.300-8.700 0z" fill="#fcc92e" />
        </svg>
      </button>
      <Task label="Firefox"><Firefox /></Task>
      <Task label="Explorer" stacked><Explorer /></Task>
      <span className="w-px bg-[#a9a9a9]" />
      <button aria-label="Monitor" className="flex w-16 items-center justify-center"><Monitor /></button>
      <button aria-label="Chrome" className="flex w-[62px] items-center justify-center"><Chrome /></button>
      <Task label="Chrome window"><Chrome /></Task>
      <Task label="Java EE IDE"><JavaEe /></Task>
      <Task label="Git"><FaGitAlt className="size-9 text-[#f05133]" /></Task>
      <Task label="Skype"><FaSkype className="size-[34px] rounded-xl bg-[radial-gradient(circle,#ffffff_45%,transparent_46%)] text-[#00a5e3]" /></Task>
      <Task label="Git shell"><FaGitAlt className="size-9 text-[#f05133]" /></Task>
      <Task label="Control panel" stacked><Control /></Task>
      <span className="w-[3px]" />
      <Task label="Notepad++"><Notepad /></Task>
      <div className="ml-auto flex items-center bg-linear-to-r from-[#e6e6e6] to-[#aeaeae] to-15% pl-12 text-white">
        <button aria-label="Show hidden icons"><svg viewBox="0 0 10 6" className="h-1.5 w-2.5"><path d="M.8 5.200h8.400L5 .8z" fill="#fff" stroke="#666" strokeWidth=".8" /></svg></button>
        <svg viewBox="0 0 16 16" className="ml-3 size-4"><rect width="16" height="16" rx="2" fill="#128a1a" /><rect x="1.500" y="1.500" width="13" height="13" rx="2" fill="none" stroke="#8fe08f" /><path d="M4.500 4v6.500q0 1.500 1.700 1.500T8 10.500V5v5.500q0 1.500 1.800 1.500t1.700-1.500V4" fill="none" stroke="#d8f8d8" strokeWidth="2" /></svg>
        <svg viewBox="0 0 16 14" className="ml-2 h-3.5 w-4"><path d="M.5 10.500h2v3h-2zM3.500 9h2v4.500h-2zM6.500 6.500h2v7h-2zM9.500 4h2v9.500h-2zM12.500 1h2.500v12.500h-2.500z" fill="#fff" stroke="#555" strokeWidth=".6" /></svg>
        <svg viewBox="0 0 12 16" className="ml-2.5 h-4 w-3"><path d="M4 1h4v1.500h2.500v13h-9v-13H4z" fill="#fff" stroke="#444" /><path d="M3.500 5h5v8.500h-5z" fill="#b5b5b5" stroke="#555" strokeWidth=".8" /></svg>
        <svg viewBox="0 0 14 16" className="ml-3 h-4 w-3.5"><path d="M1 5.500h2.500L8 1.500v13l-4.500-4H1z" fill="#fff" stroke="#555" /><path d="M10 5q2 3 0 6M12 3.500q2.500 4.500 0 9" fill="none" stroke="#fff" /></svg>
        <time className="ml-3 w-[70px] whitespace-nowrap text-center leading-[17px]">07:52<br />11-01-2015</time>
        <button aria-label="Show desktop" className="ml-1.5 h-full w-[15px] border border-[#8b8b8b] bg-linear-to-br from-[#8f8f8f] via-[#d9d9d9] to-[#9a9a9a]" />
      </div>
    </footer>
  );
}

export default function App() {
  return (
    <div className="flex h-screen flex-col overflow-hidden font-['Noto_Sans',sans-serif] text-xs text-black">
      <TabStrip />
      <Toolbar />
      <BookmarkBar />
      <div className="flex min-h-0 flex-1">
        <Page />
        <ScrollBar />
      </div>
      <TaskBar />
    </div>
  );
}
